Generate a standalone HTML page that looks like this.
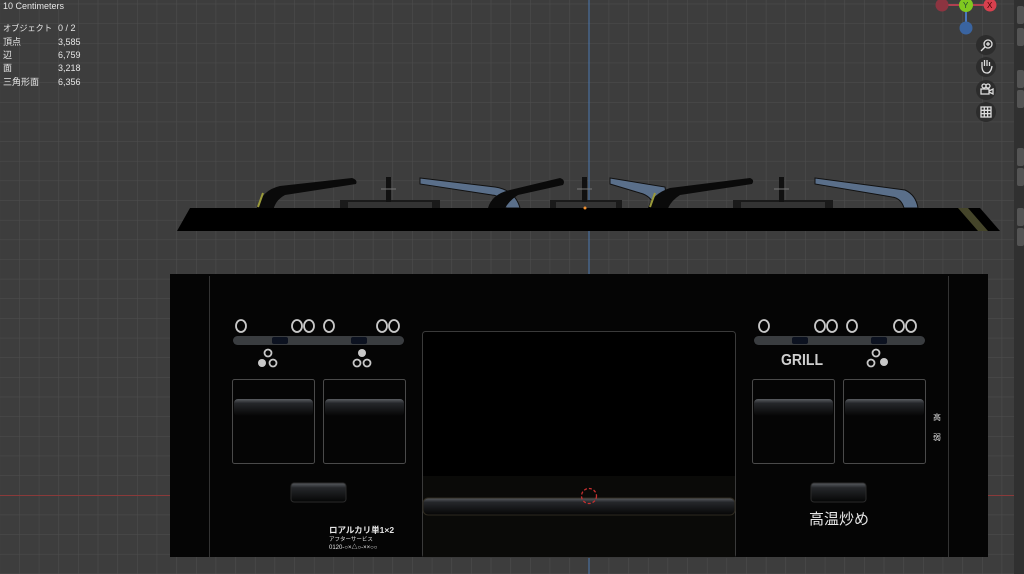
<!DOCTYPE html>
<html><head><meta charset="utf-8"><style>
html,body{margin:0;padding:0;width:1024px;height:574px;overflow:hidden;background:#3d3d3d;}
.t{font-family:"Liberation Sans","Noto Sans CJK JP",sans-serif;fill:#e6e6e6;}
</style></head><body>
<svg width="1024" height="574" viewBox="0 0 1024 574" xmlns="http://www.w3.org/2000/svg">
<defs>
<pattern id="g" x="19.15" y="3.75" width="19.65" height="19.65" patternUnits="userSpaceOnUse">
<path d="M0 0H19.65M0 0V19.65" stroke="#4e4e4e" stroke-width="1" fill="none"/>
</pattern>
<linearGradient id="h" x1="0" y1="0" x2="0" y2="1">
<stop offset="0" stop-color="#5a5d62"/><stop offset="0.25" stop-color="#25272a"/><stop offset="1" stop-color="#050505"/>
</linearGradient>
</defs>
<rect width="1024" height="574" fill="url(#g)"/>
<line x1="589" y1="0" x2="589" y2="574" stroke="#4a78b0" stroke-width="1"/>
<line x1="0" y1="495.5" x2="1024" y2="495.5" stroke="#8a3a3a" stroke-width="1"/>
<rect x="1014" y="0" width="10" height="574" fill="#303030"/>
<g fill="#545454"><rect x="1017" y="6" width="7" height="18" rx="2"/><rect x="1017" y="28" width="7" height="18" rx="2"/>
<rect x="1017" y="70" width="7" height="18" rx="2"/><rect x="1017" y="90" width="7" height="18" rx="2"/>
<rect x="1017" y="148" width="7" height="18" rx="2"/><rect x="1017" y="168" width="7" height="18" rx="2"/>
<rect x="1017" y="208" width="7" height="18" rx="2"/><rect x="1017" y="228" width="7" height="18" rx="2"/></g>
<g class="t" font-size="9">
<text x="3" y="9">10 Centimeters</text>
<text x="3" y="31" font-size="8.5" textLength="49" lengthAdjust="spacingAndGlyphs">オブジェクト</text><text x="58" y="31">0 / 2</text>
<text x="3" y="45">頂点</text><text x="58" y="45">3,585</text>
<text x="3" y="58">辺</text><text x="58" y="58">6,759</text>
<text x="3" y="71">面</text><text x="58" y="71">3,218</text>
<text x="3" y="85">三角形面</text><text x="58" y="85">6,356</text>
</g>
<line x1="942" y1="5" x2="990" y2="5" stroke="#b04050" stroke-width="2"/>
<line x1="966" y1="5" x2="966" y2="28" stroke="#4a78c0" stroke-width="2"/>
<circle cx="942" cy="5" r="6.5" fill="#8c3440"/>
<circle cx="990" cy="5" r="6.5" fill="#d8404e"/><text x="987" y="8" font-size="8" fill="#400" font-family="Liberation Sans">X</text>
<circle cx="966" cy="5" r="7" fill="#80c820"/><text x="963" y="8" font-size="8" fill="#243" font-family="Liberation Sans">Y</text>
<circle cx="966" cy="28" r="6.5" fill="#3a64a0"/>
<g fill="#2c2c2c"><circle cx="986" cy="45" r="10"/><circle cx="986" cy="67" r="10"/><circle cx="986" cy="90" r="10"/><circle cx="986" cy="112" r="10"/></g>
<g stroke="#ddd" fill="none" stroke-width="1.3">
<circle cx="988" cy="44" r="4"/><line x1="985" y1="47" x2="981" y2="51"/><line x1="986" y1="44" x2="990" y2="44"/><line x1="988" y1="42" x2="988" y2="46"/>
<path d="M982 66V62M984.5 66V60M987 66V60M989.5 66V62M982 66Q982 73 987 73Q991 73 992 66"/>
<rect x="981" y="89" width="8" height="5"/><circle cx="984" cy="86" r="2"/><circle cx="988" cy="86" r="2"/><path d="M989 91l4-2v5l-4-2"/>
<rect x="981" y="107" width="10" height="10"/><path d="M984.3 107v10M987.6 107v10M981 110.3h10M981 113.6h10"/>
</g>
<g>
<rect x="340" y="200" width="100" height="10" fill="#1a1a1a"/><rect x="348" y="202" width="84" height="6" fill="#333"/>
<rect x="550" y="200" width="72" height="10" fill="#1a1a1a"/><rect x="556" y="202" width="60" height="6" fill="#333"/>
<rect x="733" y="200" width="100" height="10" fill="#1a1a1a"/><rect x="741" y="202" width="84" height="6" fill="#333"/>
<g fill="#111"><rect x="386" y="177" width="5" height="25"/><rect x="582" y="177" width="5" height="25"/><rect x="779" y="177" width="5" height="25"/></g>
<g stroke="#777" stroke-width="1"><line x1="381" y1="189" x2="396" y2="189"/><line x1="577" y1="189" x2="592" y2="189"/><line x1="774" y1="189" x2="789" y2="189"/></g>
<path d="M420 178 L495 187 Q515 190 520 208 L506 208 Q503 196 492 195 L420 184 Z" fill="#5a6f8a" stroke="#111"/>
<path d="M610 178 L665 187 L668 208 L655 208 Q652 196 640 193 L610 184 Z" fill="#5a6f8a" stroke="#111"/>
<path d="M815 178 L905 190 Q916 195 918 208 L904 208 Q901 198 892 197 L815 184 Z" fill="#5a6f8a" stroke="#111"/>
<path d="M257 208 Q262 190 280 186 L352 178 Q358 180 356 184 L285 195 Q276 200 274 208 Z" fill="#0a0a0a"/>
<path d="M488 208 Q492 194 510 190 L560 178 Q566 180 563 185 L518 195 Q510 200 505 208 Z" fill="#0a0a0a"/>
<path d="M648 208 Q652 194 670 188 L750 178 Q755 180 752 184 L680 195 Q672 200 668 208 Z" fill="#0a0a0a"/>
<path d="M258 207 L263 193" stroke="#9a9a3a" stroke-width="2"/><path d="M650 207 L655 193" stroke="#9a9a3a" stroke-width="2"/>
<path d="M190 208 L980 208 L1000 231 L177 231 Z" fill="#000"/>
<path d="M958 208 L968 208 L988 231 L978 231 Z" fill="#45452a"/>
<circle cx="585" cy="208" r="1.5" fill="#f09030"/>
</g>
<rect x="170" y="274" width="818" height="283" fill="#050505"/>
<line x1="209.5" y1="276" x2="209.5" y2="557" stroke="#333"/>
<line x1="948.5" y1="276" x2="948.5" y2="557" stroke="#333"/>
<rect x="422.5" y="331.5" width="313" height="226" rx="3" fill="#000" stroke="#3a3a3a"/>
<rect x="423" y="476" width="312" height="81" fill="#0a0a08"/>
<rect x="423" y="498" width="312" height="17" rx="5" fill="url(#h)" stroke="#2e2a20"/>
<circle cx="589" cy="496" r="7.5" fill="none" stroke="#c83030" stroke-width="1.3" stroke-dasharray="3 2"/>
<g fill="none" stroke="#c8c8c8" stroke-width="1.8">
<ellipse cx="241" cy="326" rx="5" ry="6"/><ellipse cx="297" cy="326" rx="5" ry="6"/><ellipse cx="309" cy="326" rx="5" ry="6"/><ellipse cx="329" cy="326" rx="5" ry="6"/>
<ellipse cx="382" cy="326" rx="5" ry="6"/><ellipse cx="394" cy="326" rx="5" ry="6"/>
<ellipse cx="764" cy="326" rx="5" ry="6"/><ellipse cx="820" cy="326" rx="5" ry="6"/><ellipse cx="832" cy="326" rx="5" ry="6"/><ellipse cx="852" cy="326" rx="5" ry="6"/>
<ellipse cx="899" cy="326" rx="5" ry="6"/><ellipse cx="911" cy="326" rx="5" ry="6"/>
<circle cx="268" cy="353" r="3.5"/><circle cx="273" cy="363" r="3.5"/>
<circle cx="357" cy="363" r="3.5"/><circle cx="367" cy="363" r="3.5"/>
<circle cx="876" cy="353" r="3.5"/><circle cx="871" cy="363" r="3.5"/>
</g>
<g fill="#c8c8c8"><circle cx="262" cy="363" r="4"/><circle cx="362" cy="353" r="4"/><circle cx="884" cy="362" r="4"/></g>
<rect x="233" y="336" width="171" height="9" rx="4.5" fill="#3a3d40"/>
<rect x="272" y="337" width="16" height="7" rx="2" fill="#0c1220"/><rect x="351" y="337" width="16" height="7" rx="2" fill="#0c1220"/>
<rect x="754" y="336" width="171" height="9" rx="4.5" fill="#3a3d40"/>
<rect x="792" y="337" width="16" height="7" rx="2" fill="#0c1220"/><rect x="871" y="337" width="16" height="7" rx="2" fill="#0c1220"/>
<text x="781" y="365" font-family="Liberation Sans Narrow, Liberation Sans" font-weight="bold" font-size="16" fill="#cfcfcf" textLength="42" lengthAdjust="spacingAndGlyphs">GRILL</text>
<g fill="none" stroke="#4a4a4a">
<rect x="232.5" y="379.5" width="82" height="84" rx="2"/><rect x="323.5" y="379.5" width="82" height="84" rx="2"/>
<rect x="752.5" y="379.5" width="82" height="84" rx="2"/><rect x="843.5" y="379.5" width="82" height="84" rx="2"/>
</g>
<g>
<rect x="234" y="399" width="79" height="17" rx="4" fill="url(#h)"/><rect x="325" y="399" width="79" height="17" rx="4" fill="url(#h)"/>
<rect x="754" y="399" width="79" height="17" rx="4" fill="url(#h)"/><rect x="845" y="399" width="79" height="17" rx="4" fill="url(#h)"/>
<rect x="291" y="483" width="55" height="19" rx="3" fill="url(#h)" stroke="#2a2a2a"/>
<rect x="811" y="483" width="55" height="19" rx="3" fill="url(#h)" stroke="#2a2a2a"/>
</g>
<g class="t" fill="#d0d0d0">
<text x="329" y="533" font-size="8.5" font-weight="bold">ロアルカリ単1×2</text>
<text x="329" y="541" font-size="5.5">アフターサービス</text>
<text x="329" y="549" font-size="6">0120-○×△○-××○○</text>
<text x="809" y="524" font-size="15">高温炒め</text>
<text x="933" y="420" font-size="8">高</text>
<text x="933" y="440" font-size="8">弱</text>
</g>
</svg>
</body></html>
